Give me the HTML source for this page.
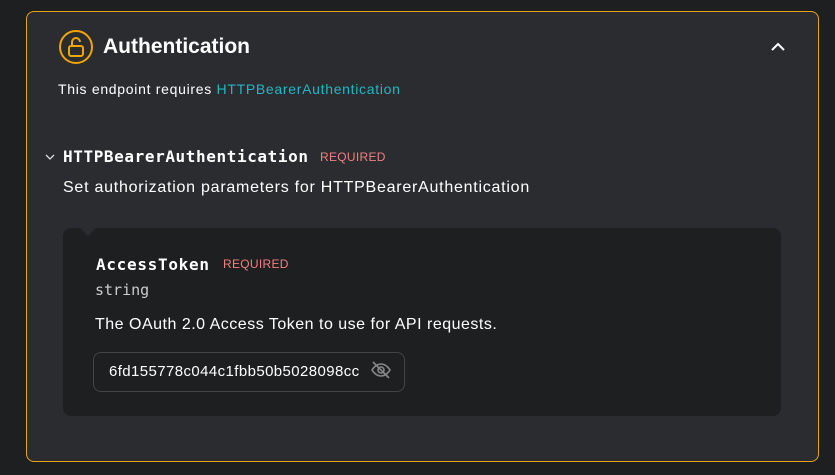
<!DOCTYPE html>
<html><head><style>
body{margin:0;width:835px;height:475px;background:#1e1f21;font-family:"Liberation Sans",sans-serif;overflow:hidden;position:relative}
.card{position:absolute;left:26px;top:11px;width:791px;height:449px;border:1px solid #e8a317;border-radius:8px;background:#2b2c2f}
.abs{position:absolute;white-space:nowrap}
.mono{font-family:"DejaVu Sans Mono","Liberation Mono",monospace}
.inner{position:absolute;left:63px;top:228px;width:718px;height:188px;background:#1e1f21;border-radius:8px}
.req{color:#f08080;font-size:12px;letter-spacing:0.3px}
</style></head><body>
<div class="card"></div>
<svg class="abs" style="left:58px;top:29px" width="36" height="36" viewBox="0 0 36 36"><circle cx="18" cy="18" r="16" fill="none" stroke="#f0a500" stroke-width="2"/><rect x="11" y="17" width="14" height="10" rx="2" fill="none" stroke="#f0a500" stroke-width="2"/><path d="M14 17v-4a4 4 0 0 1 8 0" fill="none" stroke="#f0a500" stroke-width="2"/></svg>
<div class="abs" style="left:103px;top:35px;font-size:21px;font-weight:bold;color:#fff">Authentication</div>
<svg class="abs" style="left:770px;top:41px" width="16" height="12"><path d="M2 9l6-6 6 6" fill="none" stroke="#fff" stroke-width="2"/></svg>
<div class="abs" style="left:58px;top:81px;font-size:14px;color:#fff;letter-spacing:0.7px">This endpoint requires <span style="color:#1fb8c4">HTTPBearerAuthentication</span></div>
<svg class="abs" style="left:45px;top:153px" width="10" height="8"><path d="M1 2l4 4 4-4" fill="none" stroke="#ddd" stroke-width="1.3"/></svg>
<div class="abs mono" style="left:63px;top:147px;font-size:16px;font-weight:bold;color:#fff;letter-spacing:0.6px">HTTPBearerAuthentication</div>
<div class="abs req" style="left:320px;top:150px">REQUIRED</div>
<div class="abs" style="left:63px;top:179px;font-size:16px;color:#fff;letter-spacing:0.75px">Set authorization parameters for HTTPBearerAuthentication</div>
<div class="inner"></div>
<div class="abs" style="left:80px;top:228px;width:0;height:0;border-left:8px solid transparent;border-right:8px solid transparent;border-top:8px solid #2b2c2f"></div>
<div class="abs mono" style="left:96px;top:255px;font-size:16px;font-weight:bold;color:#fff;letter-spacing:0.7px">AccessToken</div>
<div class="abs req" style="left:223px;top:257px">REQUIRED</div>
<div class="abs mono" style="left:95px;top:281px;font-size:15px;color:#ccc">string</div>
<div class="abs" style="left:95px;top:316px;font-size:16px;color:#fff;letter-spacing:0.5px">The OAuth 2.0 Access Token to use for API requests.</div>
<div class="abs" style="left:93px;top:352px;width:310px;height:38px;border:1px solid #444;border-radius:8px"></div>
<div class="abs" style="left:109px;top:363px;width:250px;overflow:hidden;font-size:15px;color:#fff;letter-spacing:0.4px">6fd155778c044c1fbb50b5028098cc</div>
<svg class="abs" style="left:370px;top:359px" width="22" height="22" viewBox="0 0 22 22"><path d="M2 11s3.5-6 9-6 9 6 9 6-3.5 6-9 6-9-6-9-6z" fill="none" stroke="#888" stroke-width="1.6"/><circle cx="11" cy="11" r="3" fill="none" stroke="#888" stroke-width="1.6"/><path d="M3 3l16 16" stroke="#888" stroke-width="1.6"/></svg>
</body></html>
